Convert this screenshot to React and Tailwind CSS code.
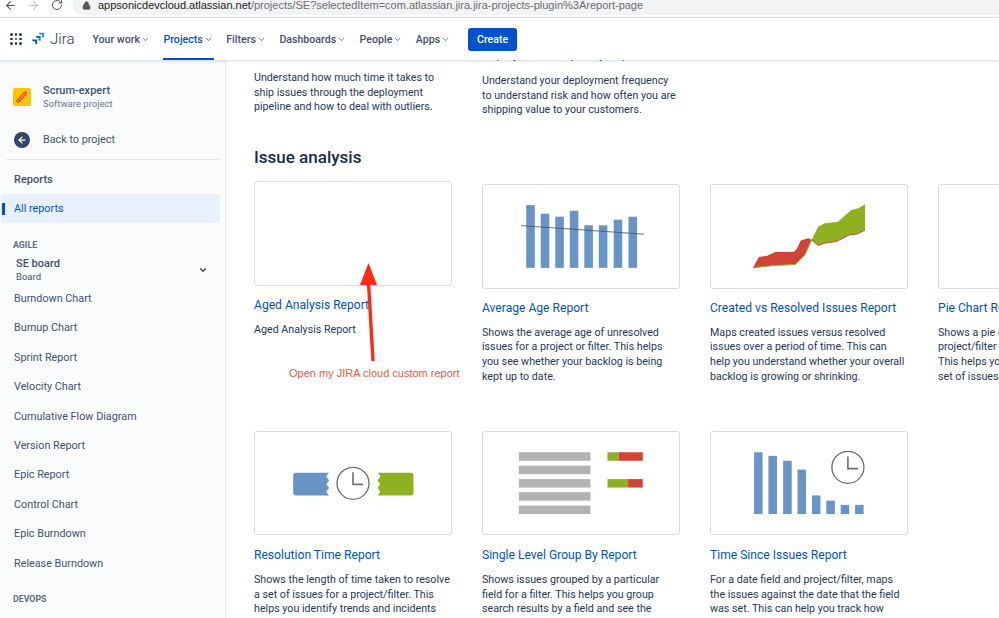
import React from "react";
import { ArrowLeft, ArrowRight, RotateCw, Lock, ChevronDown } from "lucide-react";

const navItems = ["Your work", "Projects", "Filters", "Dashboards", "People", "Apps"];
const sideLinks = [
  "Burndown Chart",
  "Burnup Chart",
  "Sprint Report",
  "Velocity Chart",
  "Cumulative Flow Diagram",
  "Version Report",
  "Epic Report",
  "Control Chart",
  "Epic Burndown",
  "Release Burndown",
];

const AvgChart = () => {
  const tops = [75, 101, 110, 92, 136, 136, 119, 110];
  const xs = [137, 181, 225, 269, 313, 357, 402, 447];
  return (
    <svg viewBox="6 14 594 312" className="w-full h-full">
      {xs.map((x, i) => (
        <rect key={i} x={x} y={tops[i]} width="26" height={265 - tops[i]} fill="#6894c6" />
      ))}
      <line x1="122" y1="137" x2="494" y2="163" stroke="#555" strokeWidth="3" opacity="0.85" />
    </svg>
  );
};

const CreatedChart = () => (
  <svg viewBox="690 14 594 312" className="w-full h-full">
    <polygon
      points="817,265 835,232 860,228 885,217 940,217 950,208 962,182 985,175 995,180 975,225 945,255 880,258"
      fill="#d04437"
    />
    <polygon
      points="995,180 1015,140 1035,130 1075,125 1115,90 1135,85 1157,72 1157,150 1135,162 1110,165 1070,185 1035,190 1015,197"
      fill="#8eb021"
    />
    <polyline points="817,265 880,258 945,255 975,225 995,180" fill="none" stroke="#8eb021" strokeWidth="3" />
    <polyline points="995,180 1015,197 1035,190 1070,185 1110,165 1135,162 1157,150" fill="none" stroke="#d04437" strokeWidth="3" />
  </svg>
);

const Clock = ({ cx, cy, hx, hy, my }) => (
  <g fill="none" stroke="#707070" strokeWidth="4">
    <circle cx={cx} cy={cy} r="49" />
    <path d={`M${hx} ${my}V${hy}H${hx + 31}`} strokeWidth="5" />
  </g>
);

const ResolutionChart = () => (
  <svg viewBox="12 17 594 312" className="w-full h-full">
    <path d="M134 142H235L227 153L236 165L228 177L236 188L227 199L235 211H134Q126 211 126 203V150Q126 142 134 142Z" fill="#6894c6" />
    <path d="M385 142H486Q494 142 494 150V203Q494 211 486 211H385L393 199L384 188L392 177L384 165L393 153Z" fill="#8eb021" />
    <Clock cx={309} cy={174} hx={309} hy={177} my={140} />
  </svg>
);

const GroupChart = () => (
  <svg viewBox="696 17 594 312" className="w-full h-full">
    {[79, 120, 161, 201, 242].map((y) => (
      <rect key={y} x="803" y={y} width="219" height="26" fill="#b2b2b2" />
    ))}
    <rect x="1074" y="79" width="34" height="26" fill="#8eb021" />
    <rect x="1108" y="79" width="74" height="26" fill="#d04437" />
    <rect x="1074" y="161" width="63" height="26" fill="#8eb021" />
    <rect x="1137" y="161" width="45" height="26" fill="#d04437" />
  </svg>
);

const TimeChart = () => {
  const tops = [79, 90, 105, 132, 211, 227, 240, 240];
  const xs = [158, 202, 247, 291, 335, 379, 423, 467];
  return (
    <svg viewBox="29 17 594 312" className="w-full h-full">
      {xs.map((x, i) => (
        <rect key={i} x={x} y={tops[i]} width="26" height={268 - tops[i]} fill="#6894c6" />
      ))}
      <Clock cx={445} cy={125} hx={445} hy={129} my={92} />
    </svg>
  );
};

const row1 = [
  {
    title: "Aged Analysis Report",
    lines: "Aged Analysis Report",
    first: true,
  },
  {
    title: "Average Age Report",
    chart: <AvgChart />,
    lines: "Shows the average age of unresolved issues for a project or filter. This helps you see whether your backlog is being kept up to date.",
  },
  {
    title: "Created vs Resolved Issues Report",
    chart: <CreatedChart />,
    lines: "Maps created issues versus resolved issues over a period of time. This can help you understand whether your overall backlog is growing or shrinking.",
  },
  {
    title: "Pie Chart Report",
    lines: (
      <>
        Shows a pie chart of issues for a
        <br />
        project/filter grouped by a field.
        <br />
        This helps you see the breakdown of a set of issues, at a glance.
      </>
    ),
  },
];

const row2 = [
  {
    title: "Resolution Time Report",
    chart: <ResolutionChart />,
    lines: "Shows the length of time taken to resolve a set of issues for a project/filter. This helps you identify trends and incidents",
  },
  {
    title: "Single Level Group By Report",
    chart: <GroupChart />,
    lines: "Shows issues grouped by a particular field for a filter. This helps you group search results by a field and see the",
  },
  {
    title: "Time Since Issues Report",
    chart: <TimeChart />,
    lines: "For a date field and project/filter, maps the issues against the date that the field was set. This can help you track how",
  },
];

const ReportCard = ({ item, lower }) => (
  <div className={item.first || lower ? "" : "pt-[3px]"}>
    <div className={(lower ? "h-[104px]" : "h-[105px]") + " rounded-[3px] border border-[#dcdcdc] bg-white overflow-hidden"}>{item.chart}</div>
    <div className={(lower ? "mt-[12px]" : "mt-[11px]") + " text-[12.1px] leading-[16px] text-[#0052cc] whitespace-nowrap"}>{item.title}</div>
    <p className="mt-[10px] text-[10.7px] leading-[14.6px] text-[#253858]">{item.lines}</p>
  </div>
);

const JiraLogo = () => (
  <svg viewBox="0 0 24 24" className="w-[15px] h-[15px]">
    <path d="M22.5 1H11.2a3 3 0 0 0 3 3h2.1v2a3 3 0 0 0 3 3V1.9c0-.5 3.2-.9 3.2-.9Z" fill="#2684ff" />
    <path d="M17 6.5H5.7a3 3 0 0 0 3 3h2.1v2a3 3 0 0 0 3 3V7.4c0-.5 3.2-.9 3.2-.9Z" fill="#1a72e8" />
    <path d="M11.4 12H.1a3 3 0 0 0 3 3h2.1v2a3 3 0 0 0 3 3v-7.1c0-.5 3.2-.9 3.2-.9Z" fill="#0052cc" />
  </svg>
);

export default function App() {
  return (
    <div className="relative w-[999px] h-[618px] overflow-hidden bg-white font-['Roboto',sans-serif] flex flex-col">
      {/* browser bar */}
      <div className="h-[18px] shrink-0 flex items-start border-b border-[#e3e3e3] bg-white text-[#5f6368]">
        <ArrowLeft size={13} strokeWidth={2} className="ml-[4px] mt-[-1px] text-[#555]" />
        <ArrowRight size={13} strokeWidth={2} className="ml-[10px] mt-[-1px] text-[#c4c4c4]" />
        <RotateCw size={12} strokeWidth={2} className="ml-[11px] mt-[-1px] text-[#555]" />
        <div className="ml-[10px] h-[15px] flex-1 rounded-bl-[8px] bg-[#f1f3f4] flex items-start pl-[9px] overflow-hidden">
          <Lock size={9} className="text-[#555] mt-[1px]" fill="#555" />
          <span className="ml-[7px] font-['Liberation_Sans',sans-serif] text-[11px] leading-[11px] whitespace-nowrap text-[#6b6e72]">
            <span className="text-[#222]">appsonicdevcloud.atlassian.net</span>
            /projects/SE?selectedItem=com.atlassian.jira.jira-projects-plugin%3Areport-page
          </span>
        </div>
      </div>

      {/* top nav */}
      <div className="relative z-10 h-[42px] shrink-0 flex items-center bg-white shadow-[0_1px_3px_rgba(9,30,66,0.18)]">
        <div className="ml-[10px] grid grid-cols-3 gap-[2px] w-[12px]">
          {Array.from({ length: 9 }).map((_, i) => (
            <span key={i} className="w-[2.7px] h-[2.7px] rounded-full bg-[#253858]" />
          ))}
        </div>
        <div className="ml-[10px] flex items-center gap-[3px]">
          <JiraLogo />
          <span className="text-[15px] leading-none font-light text-[#253858]">Jira</span>
        </div>
        <div className="ml-[17px] flex h-full items-center gap-[11.5px]">
          {navItems.map((n) => (
            <div
              key={n}
              className={
                "relative h-full flex items-center gap-[1px] px-[1px] pt-[1px] text-[10.6px] font-medium " +
                (n === "Projects" ? "text-[#0052cc]" : "text-[#42526e]")
              }
            >
              {n}
              <ChevronDown size={9} />
              {n === "Projects" && <span className="absolute left-0 right-0 bottom-0 h-[2px] bg-[#0052cc]" />}
            </div>
          ))}
        </div>
        <button className="ml-[17px] h-[23px] w-[49px] mt-[1px] rounded-[3px] bg-[#0052cc] text-white text-[10.6px] font-medium">
          Create
        </button>
      </div>

      <div className="flex flex-1 min-h-0">
        {/* sidebar */}
        <aside className="w-[226px] shrink-0 bg-[#fafbfc] border-r border-[#e9ebee] text-[#42526e] overflow-hidden">
          <div className="flex items-center pl-[13px] pt-[24px]">
            <div className="w-[18px] h-[18px] rounded-[2px] bg-[#ffc400] flex items-center justify-center">
              <svg viewBox="0 0 18 18" className="w-[18px] h-[18px]">
                <path d="M5 13L12.5 5" stroke="#e8501f" strokeWidth="3.5" strokeLinecap="round" />
                <path d="M5.5 12.5L12 5.5" stroke="#ffd9c2" strokeWidth="0.8" />
              </svg>
            </div>
            <div className="ml-[12px]">
              <div className="text-[11px] leading-[14px] font-medium text-[#42526e]">Scrum-expert</div>
              <div className="text-[9.5px] leading-[12px] text-[#6b778c]">Software project</div>
            </div>
          </div>
          <div className="flex items-center pl-[14px] mt-[22px]">
            <div className="w-[16px] h-[16px] rounded-full bg-[#344563] flex items-center justify-center">
              <ArrowLeft size={10} strokeWidth={3} className="text-white" />
            </div>
            <span className="ml-[13px] text-[10.8px] text-[#42526e]">Back to project</span>
          </div>
          <div className="mx-[6px] mt-[11px] h-[1px] bg-[#e4e6ea]" />
          <div className="pl-[14px] mt-[13px] text-[11px] leading-[14px] font-medium text-[#42526e]">Reports</div>
          <div className="relative mx-[1px] mt-[7px] h-[29px] w-[219px] rounded-[3px] bg-[#e8f0fb] flex items-center pl-[13px] pt-[1px] text-[10.8px] text-[#0052cc]">
            <span className="absolute left-[1px] top-[9px] h-[12px] w-[3px] bg-[#0052cc]" />
            All reports
          </div>
          <div className="pl-[13px] mt-[17px] text-[8.8px] leading-[11px] font-bold text-[#5e6c84]">AGILE</div>
          <div className="mt-[6px] pl-[16px] pr-[17px] flex items-center justify-between">
            <div>
              <div className="text-[11px] leading-[13px] font-medium">SE board</div>
              <div className="text-[9.5px] leading-[13px]">Board</div>
            </div>
            <ChevronDown size={10} strokeWidth={3} className="text-[#344563]" />
          </div>
          <div className="mt-[1px] pl-[14px]">
            {sideLinks.map((s) => (
              <div key={s} className="h-[29.45px] flex items-center text-[10.8px] text-[#42526e]">{s}</div>
            ))}
          </div>
          <div className="pl-[13px] mt-[15px] text-[8.8px] leading-[11px] font-bold text-[#5e6c84]">DEVOPS</div>
        </aside>

        {/* main content */}
        <main className="flex-1 overflow-hidden pl-[28px] text-[#253858]">
          <div className="grid grid-cols-[198px_198px] gap-x-[30px] mt-[11px] text-[10.7px] leading-[14.6px]">
            <p>Understand how much time it takes to ship issues through the deployment pipeline and how to deal with outliers.</p>
            <div className="pt-[3px]">
              <div className="-mt-[28px] mb-[12px] h-[16px] text-[12.1px] leading-[16px] text-[#0052cc]">Deployment Frequency Report</div>
              <p>Understand your deployment frequency to understand risk and how often you are shipping value to your customers.</p>
            </div>
          </div>
          <h2 className="mt-[29px] text-[17px] leading-[20px] font-medium text-[#172b4d]">Issue analysis</h2>
          <div className="mt-[14px] grid grid-cols-[198px_198px_198px_198px] gap-x-[30px] items-start">
            {row1.map((r) => <ReportCard key={r.title} item={r} />)}
          </div>
          <div className="mt-[47px] grid grid-cols-[198px_198px_198px] gap-x-[30px] items-start">
            {row2.map((r) => <ReportCard key={r.title} item={r} lower />)}
          </div>
        </main>
      </div>

      {/* annotation over the page */}
      <svg className="absolute left-[355px] top-[260px] w-[30px] h-[104px]" viewBox="0 0 30 104">
        <polygon points="13.5,3 22,25 5,25" fill="#ff2a12" />
        <line x1="13.5" y1="22" x2="18" y2="101" stroke="#ff2a12" strokeWidth="3.4" />
      </svg>
      <div className="absolute left-[289px] top-[366px] font-['Liberation_Sans',sans-serif] text-[11px] leading-[14px] text-[#f9553a] whitespace-nowrap">
        Open my JIRA cloud custom report
      </div>
    </div>
  );
}
